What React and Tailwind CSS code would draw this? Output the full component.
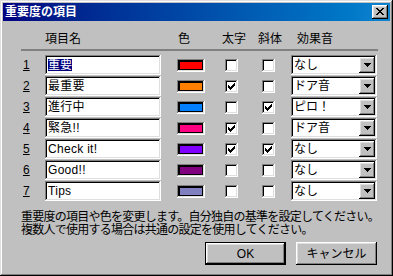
import React from "react";

const raised =
  "shadow-[inset_-1px_-1px_#000,inset_1px_1px_#fff,inset_-2px_-2px_#808080,inset_2px_2px_#dfdfdf]";
const sunken =
  "shadow-[inset_-1px_-1px_#fff,inset_1px_1px_#808080,inset_-2px_-2px_#dfdfdf,inset_2px_2px_#000]";

const CHECK = ["......X", ".....XX", "X...XXX", "XX.XXX.", "XXXXX..", ".XXX...", "..X...."];
const ARROW = ["XXXXXXX", ".XXXXX.", "..XXX..", "...X..."];
const CROSS = ["XX....XX", ".XX..XX.", "..XXXX..", "...XX...", "..XXXX..", ".XX..XX.", "XX....XX"];

// turn a little bitmap into one svg path of 1px squares
function pixels(rows, ox, oy) {
  let d = "";
  rows.forEach((row, y) => {
    [...row].forEach((c, x) => {
      if (c === "X") d += `M${ox + x} ${oy + y}h1v1h-1z`;
    });
  });
  return d;
}

const items = [
  { name: "重要", color: "bg-[#ff0000]", bold: false, italic: false, sound: "なし", selected: true },
  { name: "最重要", color: "bg-[#ff8000]", bold: true, italic: false, sound: "ドア音" },
  { name: "進行中", color: "bg-[#0080ff]", bold: false, italic: true, sound: "ピロ！" },
  { name: "緊急!!", color: "bg-[#ff0080]", bold: true, italic: false, sound: "ドア音" },
  { name: "Check it!", color: "bg-[#8000ff]", bold: true, italic: true, sound: "なし" },
  { name: "Good!!", color: "bg-[#800080]", bold: false, italic: false, sound: "なし" },
  { name: "Tips", color: "bg-[#8080c0]", bold: false, italic: false, sound: "なし" },
];

function Checkbox({ checked }) {
  return (
    <div className={`w-[13px] h-[13px] bg-white ${sunken}`}>
      {checked && (
        <svg width="13" height="13" shapeRendering="crispEdges">
          <path d={pixels(CHECK, 3, 3)} fill="#000" />
        </svg>
      )}
    </div>
  );
}

function Combo({ value }) {
  return (
    <div className={`w-[86px] h-[20px] bg-white p-[2px] flex ${sunken}`}>
      <div className="flex-1 pl-[1px] text-[12px] leading-[16px] text-black">{value}</div>
      <div className={`w-[16px] h-[16px] bg-[#c0c0c0] ${raised}`}>
        <svg width="16" height="16" shapeRendering="crispEdges">
          <path d={pixels(ARROW, 5, 6)} fill="#000" />
        </svg>
      </div>
    </div>
  );
}

function Row({ index, item }) {
  return (
    <div className="h-[20px] flex items-center">
      <div className="w-[24px] pl-[2px] text-[12px] leading-[12px] underline">{index}</div>
      <div className={`w-[116px] h-[20px] bg-white p-[2px] pl-[3px] mr-[16px] flex items-center ${sunken}`}>
        {item.selected ? (
          <span className="inline-block h-[12px] leading-[12px] text-[12px] bg-[#000080] text-white">
            {item.name}
          </span>
        ) : (
          <span className="text-[12px] leading-[12px] tracking-[0.3px]">{item.name}</span>
        )}
      </div>
      <div className={`w-[28px] h-[13px] p-[2px] mr-[20px] ${sunken}`}>
        <div className={`w-full h-full border border-black ${item.color}`} />
      </div>
      <div className="mr-[24px]">
        <Checkbox checked={item.bold} />
      </div>
      <div className="mr-[16px]">
        <Checkbox checked={item.italic} />
      </div>
      <Combo value={item.sound} />
    </div>
  );
}

export default function App() {
  return (
    <div
      className={`w-[393px] h-[276px] bg-[#c0c0c0] p-[3px] text-black font-['Liberation_Sans','Noto_Sans_CJK_JP',sans-serif] shadow-[inset_-1px_-1px_#000,inset_1px_1px_#dfdfdf,inset_-2px_-2px_#808080,inset_2px_2px_#fff]`}
    >
      <div className="h-[18px] flex items-center justify-between pl-[2px] pr-[2px] bg-linear-to-r from-[#000080] to-[#1084d0]">
        <span className="text-white font-bold text-[12px] leading-[12px]">重要度の項目</span>
        <div className={`w-[16px] h-[14px] bg-[#c0c0c0] ${raised}`}>
          <svg width="16" height="14" shapeRendering="crispEdges">
            <path d={pixels(CROSS, 4, 3)} fill="#000" />
          </svg>
        </div>
      </div>

      <div className="pl-[18px]">
        <div className="mt-[12px] h-[12px] flex text-[12px] leading-[12px]">
          <div className="w-[24px]" />
          <div className="w-[133px]">項目名</div>
          <div className="w-[44px]">色</div>
          <div className="w-[36px]">太字</div>
          <div className="w-[39px]">斜体</div>
          <div>効果音</div>
        </div>

        <div className="mt-[4px] h-[2px] w-[357px] bg-[#808080]" />

        <div className="mt-[4px] flex flex-col gap-[1px]">
          {items.map((item, i) => (
            <Row key={i} index={i + 1} item={item} />
          ))}
        </div>

        <div className="mt-[10px] text-[12px] leading-[13px] tracking-[-0.75px] whitespace-nowrap">
          <div>重要度の項目や色を変更します。自分独自の基準を設定してください。</div>
          <div>複数人で使用する場合は共通の設定を使用してください。</div>
        </div>

        <div className="mt-[5px] w-[356px] flex justify-end gap-[10px] text-[12px]">
          <button className={`w-[81px] h-[23px] bg-[#c0c0c0] border border-black ${raised}`}>OK</button>
          <button className={`w-[81px] h-[23px] bg-[#c0c0c0] ${raised}`}>キャンセル</button>
        </div>
      </div>
    </div>
  );
}
